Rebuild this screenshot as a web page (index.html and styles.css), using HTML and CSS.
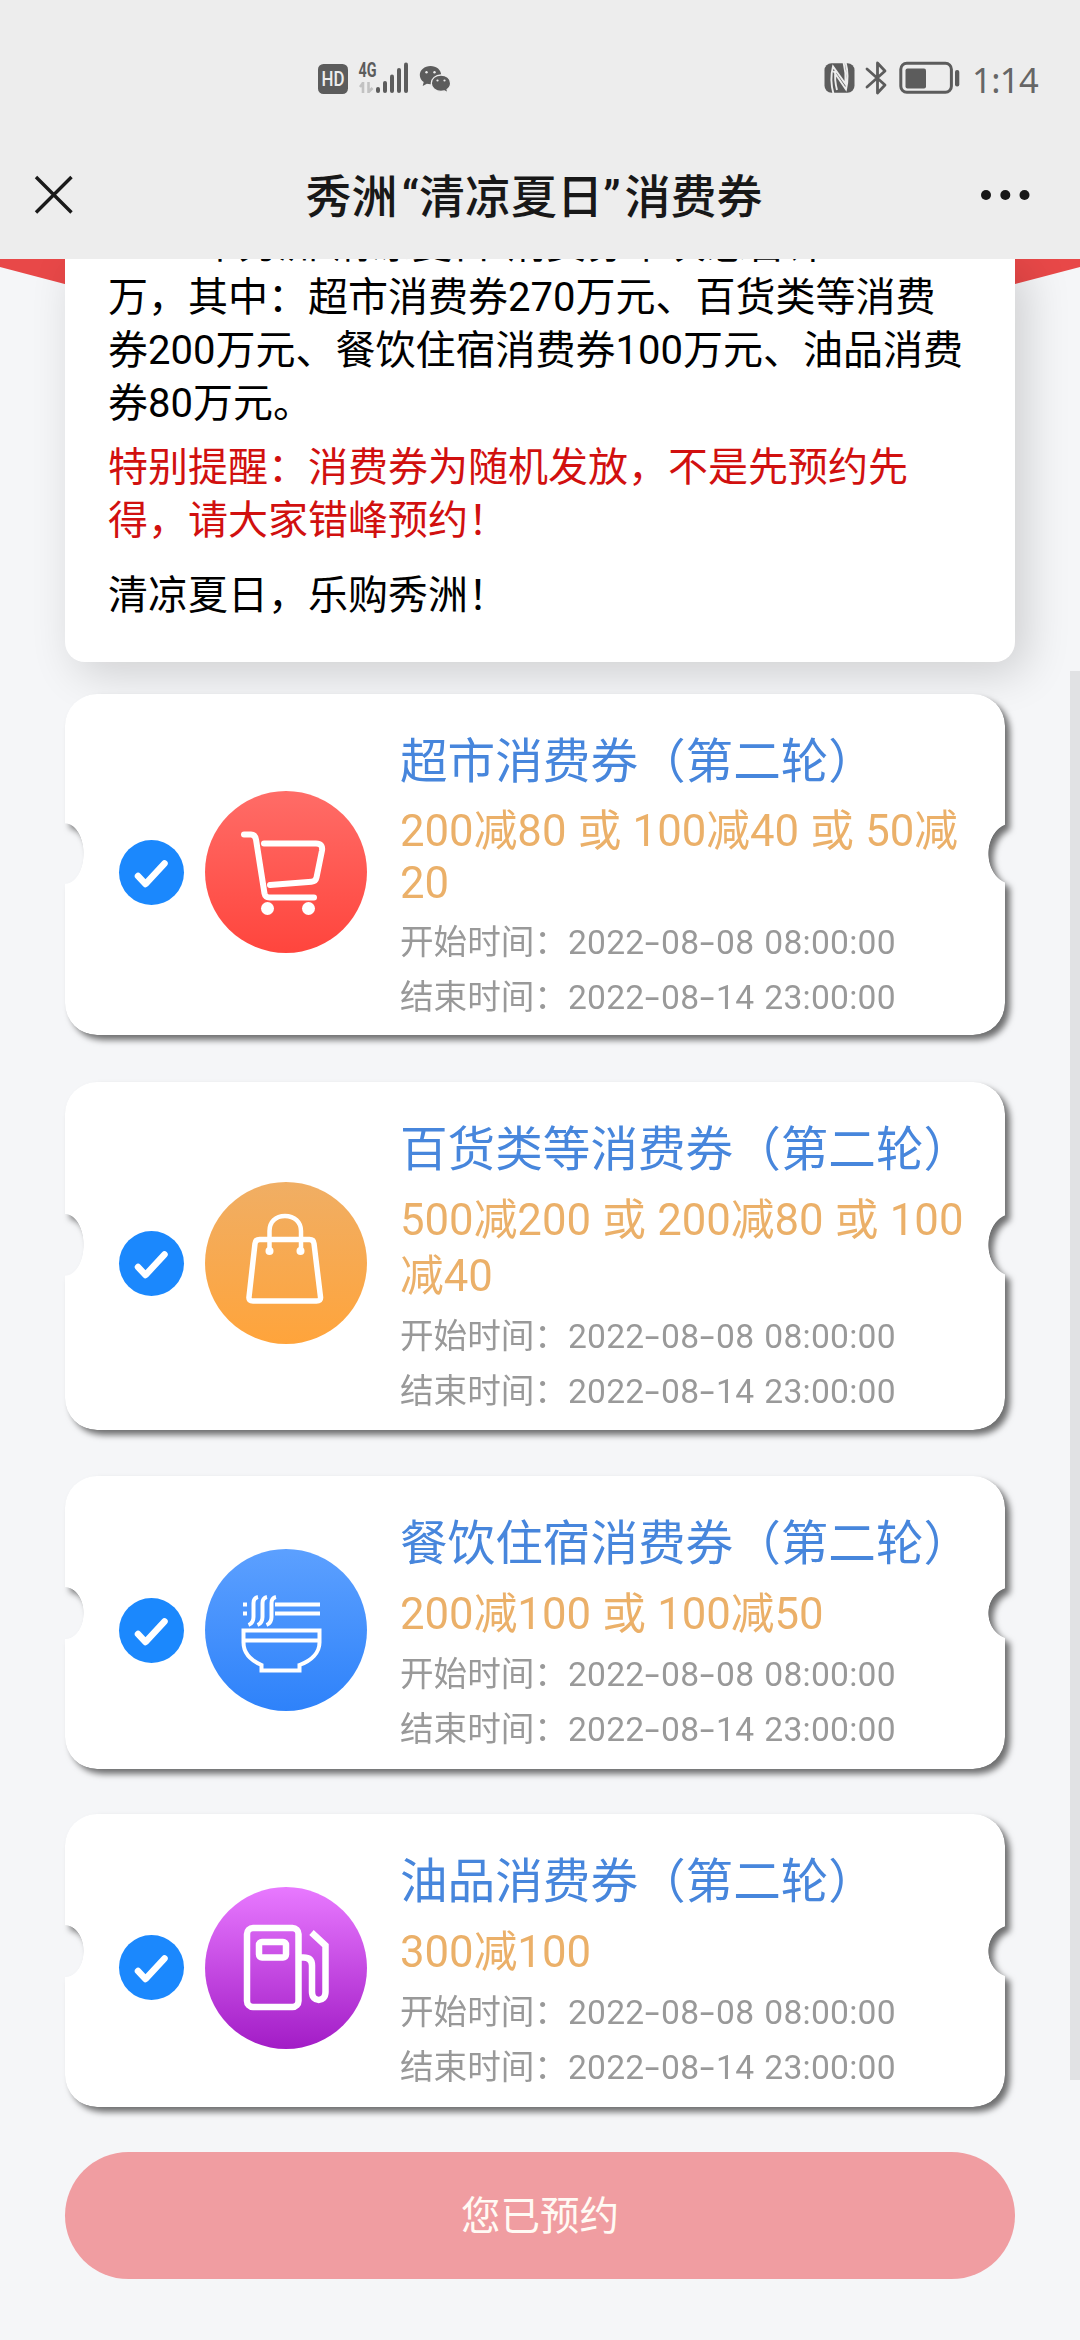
FILE: index.html
```html
<!DOCTYPE html>
<html lang="zh-CN">
<head>
<meta charset="utf-8">
<title>秀洲“清凉夏日”消费券</title>
<link rel="stylesheet" href="styles.css">
</head>
<body>
<svg class="defs" width="0" height="0" aria-hidden="true">
  <symbol id="check" viewBox="0 0 65 65"><path d="M19 36l7.500 8 19-20.500" fill="none" stroke="#fff" stroke-width="6.500" stroke-linecap="round" stroke-linejoin="round"/></symbol>
</svg>
<div class="screen">
  <header class="top">
    <div class="status">
      <svg class="status-left" width="140" height="40" viewBox="314 58 140 40" fill="#5c5c5c">
        <rect x="318" y="64" width="30" height="30" rx="5.500"/>
        <text x="333" y="86.300" class="hd" text-anchor="middle" textLength="23" lengthAdjust="spacingAndGlyphs">HD</text>
        <text x="358.500" y="76.500" class="net" textLength="18" lengthAdjust="spacingAndGlyphs">4G</text>
        <path d="M363 82v11M363 83l-3 4M368.500 82v11M368.500 92l4-4" fill="none" stroke="#c2c2c2" stroke-width="2.600"/>
        <rect x="376" y="87" width="4" height="6" rx="2"/><rect x="383" y="81" width="4" height="12" rx="2"/><rect x="390" y="74.500" width="4" height="18.500" rx="2"/><rect x="397" y="68" width="4" height="25" rx="2"/><rect x="404" y="62.500" width="4" height="30.500" rx="2"/>
        <path d="M430.500 66c-6 0-10.700 4-10.700 9 0 2.900 1.500 5.400 3.900 7.100l-1 4 4.200-2.400c1.100.3 2.300.5 3.600.5 6 0 10.700-4.100 10.700-9.200s-4.700-9-10.700-9z"/>
        <path d="M441 75c-5.500 0-9.700 3.600-9.700 8.200s4.200 8.200 9.700 8.200c1.200 0 2.300-.2 3.400-.5l3.600 1.900-.9-3.300c2.200-1.500 3.500-3.700 3.500-6.300 0-4.600-4.200-8.200-9.600-8.200z" stroke="#ededed" stroke-width="1.300"/>
        <g fill="#ededed"><circle cx="426.500" cy="72.300" r="1.200"/><circle cx="434.500" cy="72.300" r="1.200"/><circle cx="437.500" cy="80.500" r="1.100"/><circle cx="444.500" cy="80.500" r="1.100"/></g>
      </svg>
      <div class="status-right">
        <svg width="144" height="40" viewBox="818 58 144 40">
          <rect x="823.500" y="63.300" width="30" height="29.500" rx="7" fill="#5c5c5c"/>
          <path d="M832.500 94c-2.500-9-2.500-20-.5-27.500L844.500 84c.5-7 0-14-2-22M834.500 71c-.8 5 .2 14 1.500 19M844.500 62c2.500 9 2.500 19 .5 27.500L832.500 71" fill="none" stroke="#ededed" stroke-width="1.900"/>
          <path d="M866 69l18 16-7.500 8V63l7.500 8-18 16" fill="none" stroke="#5c5c5c" stroke-width="2.800" stroke-linejoin="round" stroke-linecap="round"/>
          <rect x="899.800" y="63.300" width="50.600" height="29" rx="6" fill="none" stroke="#5c5c5c" stroke-width="3"/>
          <rect x="904.500" y="68.500" width="20.500" height="20" rx="2" fill="#5c5c5c"/>
          <rect x="954" y="70" width="4.300" height="16.500" rx="2" fill="#5c5c5c"/>
        </svg>
        <span class="clock">1:14</span>
      </div>
    </div>
    <div class="nav">
      <svg width="40" height="40" viewBox="0 0 40 40"><path d="M2 2l35.500 35.500M37.500 2L2 37.500" stroke="#1a1a1a" stroke-width="3.400" fill="none"/></svg>
      <h1>秀洲<span class="open">“</span>清凉夏日<span class="close">”</span>消费券</h1>
      <svg width="50" height="12" viewBox="0 0 50 12" fill="#181818"><circle cx="6" cy="6" r="5"/><circle cx="25.300" cy="6" r="5"/><circle cx="44.500" cy="6" r="5"/></svg>
    </div>
  </header>
  <main>
    <section class="notice">
      <p>2022年秀洲“清凉夏日”消费券本次总合计650<br>万，其中：超市消费券270万元、百货类等消费<br>券200万元、餐饮住宿消费券100万元、油品消费<br>券80万元。</p>
      <p class="warn">特别提醒：消费券为随机发放，不是先预约先<br>得，请大家错峰预约！</p>
      <p class="slogan">清凉夏日，乐购秀洲！</p>
    </section>
    <section class="tickets">
      <article class="ticket t1">
        <svg class="check" viewBox="0 0 65 65"><use href="#check"/></svg>
        <svg class="icon red" viewBox="0 0 162 162"><g fill="none" stroke="#fff" stroke-width="6" stroke-linecap="round" stroke-linejoin="round"><path d="M39 43.500h7q4 0 5 5l8.500 54q.8 4 5 4H109"/><path d="M59 52.500h52q7 0 6 7l-5.500 27q-.8 4-5 4.300L65 94"/></g><circle cx="62.500" cy="117.500" r="6.500" fill="#fff"/><circle cx="103.500" cy="117.500" r="6.500" fill="#fff"/></svg>
        <div class="info"><h2>超市消费券（第二轮）</h2><p class="deal">200减80 或 100减40 或 50减<br>20</p><p class="time">开始时间：<time>2022<i>-</i>08<i>-</i>08 08:00:00</time></p><p class="time">结束时间：<time>2022<i>-</i>08<i>-</i>14 23:00:00</time></p></div>
      </article>
      <article class="ticket t2">
        <svg class="check" viewBox="0 0 65 65"><use href="#check"/></svg>
        <svg class="icon orange" viewBox="0 0 162 162"><g fill="none" stroke="#fff" stroke-width="5.500" stroke-linejoin="round"><path d="M54.500 57.500h50q4 0 4.500 4l6.500 53.500q.5 4-4 4H48q-4.500 0-4-4L50 61.500q.5-4 4.500-4z"/><path d="M64.500 68V49c0-9 6-15 15.500-15s16 6 16 15v19" stroke-width="4.500"/></g><circle cx="64.500" cy="69" r="4" fill="#fff"/><circle cx="95.500" cy="69" r="4" fill="#fff"/></svg>
        <div class="info"><h2>百货类等消费券（第二轮）</h2><p class="deal">500减200 或 200减80 或 100<br>减40</p><p class="time">开始时间：<time>2022<i>-</i>08<i>-</i>08 08:00:00</time></p><p class="time">结束时间：<time>2022<i>-</i>08<i>-</i>14 23:00:00</time></p></div>
      </article>
      <article class="ticket">
        <svg class="check" viewBox="0 0 65 65"><use href="#check"/></svg>
        <svg class="icon blue" viewBox="0 0 162 162"><g fill="none" stroke="#fff" stroke-width="4"><path d="M38.500 81.500h76v12c0 10-8 18-20 22.500v5.500H56.500V116C45 111 38.500 104 38.500 93.500zM38.500 91.500h76"/><path d="M70 55.500h45M70 64.500h45M38 55.500h4M38 64.500h4"/><path d="M53 48q-4.500 1-4.500 6v14q0 6-5 8M62 48q-4.500 1-4.500 6v14q0 6-5 8M71 48q-4.500 1-4.500 6v14q0 6-5 8"/></g></svg>
        <div class="info"><h2>餐饮住宿消费券（第二轮）</h2><p class="deal">200减100 或 100减50</p><p class="time">开始时间：<time>2022<i>-</i>08<i>-</i>08 08:00:00</time></p><p class="time">结束时间：<time>2022<i>-</i>08<i>-</i>14 23:00:00</time></p></div>
      </article>
      <article class="ticket t4">
        <svg class="check" viewBox="0 0 65 65"><use href="#check"/></svg>
        <svg class="icon purple" viewBox="0 0 162 162"><g fill="none" stroke="#fff" stroke-width="6.500"><rect x="42" y="41" width="51.500" height="79" rx="6"/><rect x="54" y="55" width="27" height="15.500" rx="3"/><path d="M94 70.500h4.500q8.500 0 8.500 8V105c0 10.500 13.500 10.500 13.500 0V58.500l-14-13"/></g></svg>
        <div class="info"><h2>油品消费券（第二轮）</h2><p class="deal">300减100</p><p class="time">开始时间：<time>2022<i>-</i>08<i>-</i>08 08:00:00</time></p><p class="time">结束时间：<time>2022<i>-</i>08<i>-</i>14 23:00:00</time></p></div>
      </article>
    </section>
    <button class="submit">您已预约</button>
  </main>
  <div class="scrollbar"></div>
</div>
</body>
</html>
```
FILE: styles.css
```css
* { box-sizing: border-box; }
body, h1, h2, p { margin: 0; font-weight: 400; }
body { font-family: Roboto, "Noto Sans CJK SC", sans-serif; }
.defs { display: block; }
.screen { position: relative; width: 1080px; height: 2340px; overflow: hidden; background: #f5f6f8; display: flex; flex-direction: column; }

.top { position: relative; z-index: 2; height: 259px; flex: none; background: #ededed; }
.status { height: 137px; padding: 58px 41px 0 314px; display: flex; justify-content: space-between; align-items: flex-start; }
.status-right { display: flex; align-items: flex-start; }
.clock { margin-left: 9px; width: 67px; font: 400 34.500px/43px "Noto Sans", sans-serif; letter-spacing: -.6px; color: #666; white-space: nowrap; }
.hd { font: 500 20px "Roboto", sans-serif; fill: #ededed; }
.net { font: 700 20px "Roboto", sans-serif; }
.nav { height: 115px; padding: 0 50px 0 34px; display: flex; align-items: center; justify-content: space-between; }
.nav h1 { padding-top: 5px; margin-left: 14px; font-size: 46px; font-weight: 500; line-height: 60px; color: #181818; white-space: nowrap; }
.open { margin-left: 4px; }
.close { margin-right: 4px; }

main { height: 2081px; padding: 0 65px; display: flex; flex-direction: column; position: relative; }
main::before { content: ""; position: absolute; left: 0; top: 0; width: 100%; height: 160px; background: #e84848; clip-path: polygon(0 0, 100% 0, 100% 8px, 50% 150px, 0 8px); }
.notice { position: relative; flex: none; height: 403px; padding: 0 43px; background: #fff; border-radius: 0 0 20px 20px; box-shadow: 11px 11px 45px rgba(0,0,0,.16); font-size: 40px; line-height: 53px; color: #000; white-space: nowrap; }
.notice p:first-child { margin-top: -41px; }
.notice .warn { margin-top: 11px; color: #d1100f; }
.notice .slogan { margin-top: 22px; }

.tickets { margin-top: 32px; display: flex; flex-direction: column; gap: 46.700px; }
.ticket { position: relative; width: 940px; height: 292.500px; padding: 15px 0 0 54px; display: flex; align-items: center; filter: drop-shadow(5px 5px 3px rgba(0,0,0,.55)); }
.t1 { height: 341px; }
.t2 { height: 348px; }
.t4 { margin-top: -1.500px; }
.ticket::before { content: ""; position: absolute; inset: 0; z-index: -1; background: #fff; border-radius: 32px; -webkit-mask-image: radial-gradient(ellipse 19px 9% at 0 46.800%, transparent 97%, #000), radial-gradient(ellipse 24px 9% at calc(100% + 7px) 46.800%, transparent 97%, #000); -webkit-mask-composite: source-in; mask-composite: intersect; }
.check { flex: none; width: 65px; height: 65px; border-radius: 50%; background: #1b88fd; }
.icon { flex: none; margin-left: 21px; width: 162px; height: 162px; border-radius: 50%; }
.red { background: linear-gradient(#ff6c67, #ff453d); }
.orange { background: linear-gradient(#f0ae64, #ffa43b); }
.blue { background: linear-gradient(#5ca0ff, #2e82fa); }
.purple { background: linear-gradient(#e879ff, #a21cc6); }
.info { align-self: flex-start; margin: 19px 0 0 33px; white-space: nowrap; }
.info h2 { font-size: 47.600px; line-height: 68px; color: #4786dc; }
.deal { margin-top: 8px; font-size: 43.700px; line-height: 56px; word-spacing: .4px; color: #ebb069; }
.t1 .deal { line-height: 52px; margin-top: 9px; }
.t1 .deal + .time { margin-top: 6px; }
.time { font-size: 33.600px; line-height: 55px; color: #999; }
.deal + .time { margin-top: 5px; }
.time time { letter-spacing: .25px; word-spacing: 1.500px; }
.time i { display: inline-block; width: 16.700px; text-align: center; font-style: normal; font-family: Inter, sans-serif; font-size: 33px; line-height: 40px; transform: scaleX(1.200); }

.submit { flex: none; margin-top: 45px; height: 127px; padding: 0 0 5px; border: 0; border-radius: 64px; background: #f09da1; color: #fffaf4; font: 400 39.500px/60px "Noto Sans CJK SC", sans-serif; }
.scrollbar { position: absolute; z-index: 3; right: 0; top: 671px; width: 10px; height: 1409px; background: #e1e2e4; }
```
